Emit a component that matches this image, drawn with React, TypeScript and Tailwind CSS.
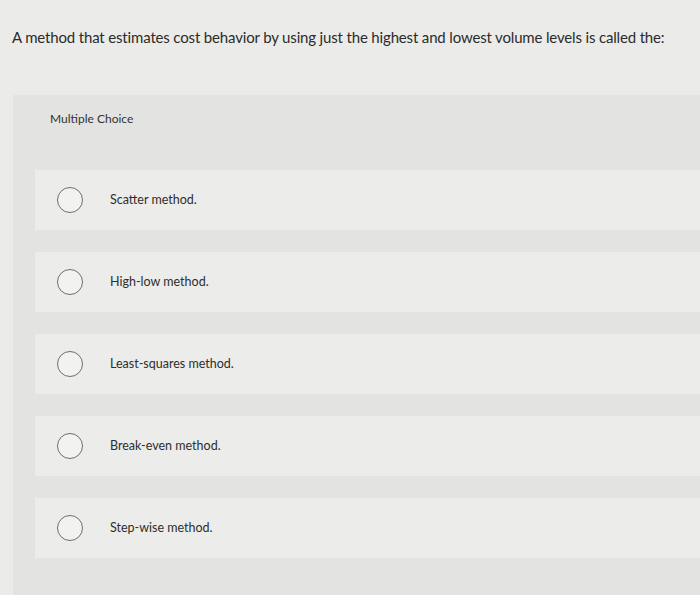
const options = [
  "Scatter method.",
  "High-low method.",
  "Least-squares method.",
  "Break-even method.",
  "Step-wise method.",
];

export default function App() {
  return (
    <div
      className="h-[595px] w-[700px] overflow-hidden bg-[#ebebe9] text-[#2b2b2b]"
      style={{ fontFamily: "Lato, 'Open Sans', sans-serif" }}
    >
      <div className="h-[95px] pl-[12px] pt-[26px]">
        <p className="text-[15px] leading-[22px] tracking-[-0.16px]">
          A method that estimates cost behavior by using just the highest and lowest volume levels is called the:
        </p>
      </div>

      <div className="ml-[13px] h-[500px] bg-[#e3e4e2] pt-[14px]">
        <p className="pl-[37px] text-[12px] leading-[20px] text-[#333]">Multiple Choice</p>

        <div className="mt-[41px] flex flex-col gap-[22px] pl-[22px]">
          {options.map((o) => (
            <div key={o} className="flex h-[60px] items-center bg-[#ececea]">
              <span className="ml-[22px] h-[26px] w-[26px] shrink-0 rounded-full border-[1.5px] border-[#6e6e6e] bg-[#f2f2f0]" />
              <span className="ml-[27px] text-[12.5px] text-[#2e2e2e]">{o}</span>
            </div>
          ))}
        </div>
      </div>
    </div>
  );
}
